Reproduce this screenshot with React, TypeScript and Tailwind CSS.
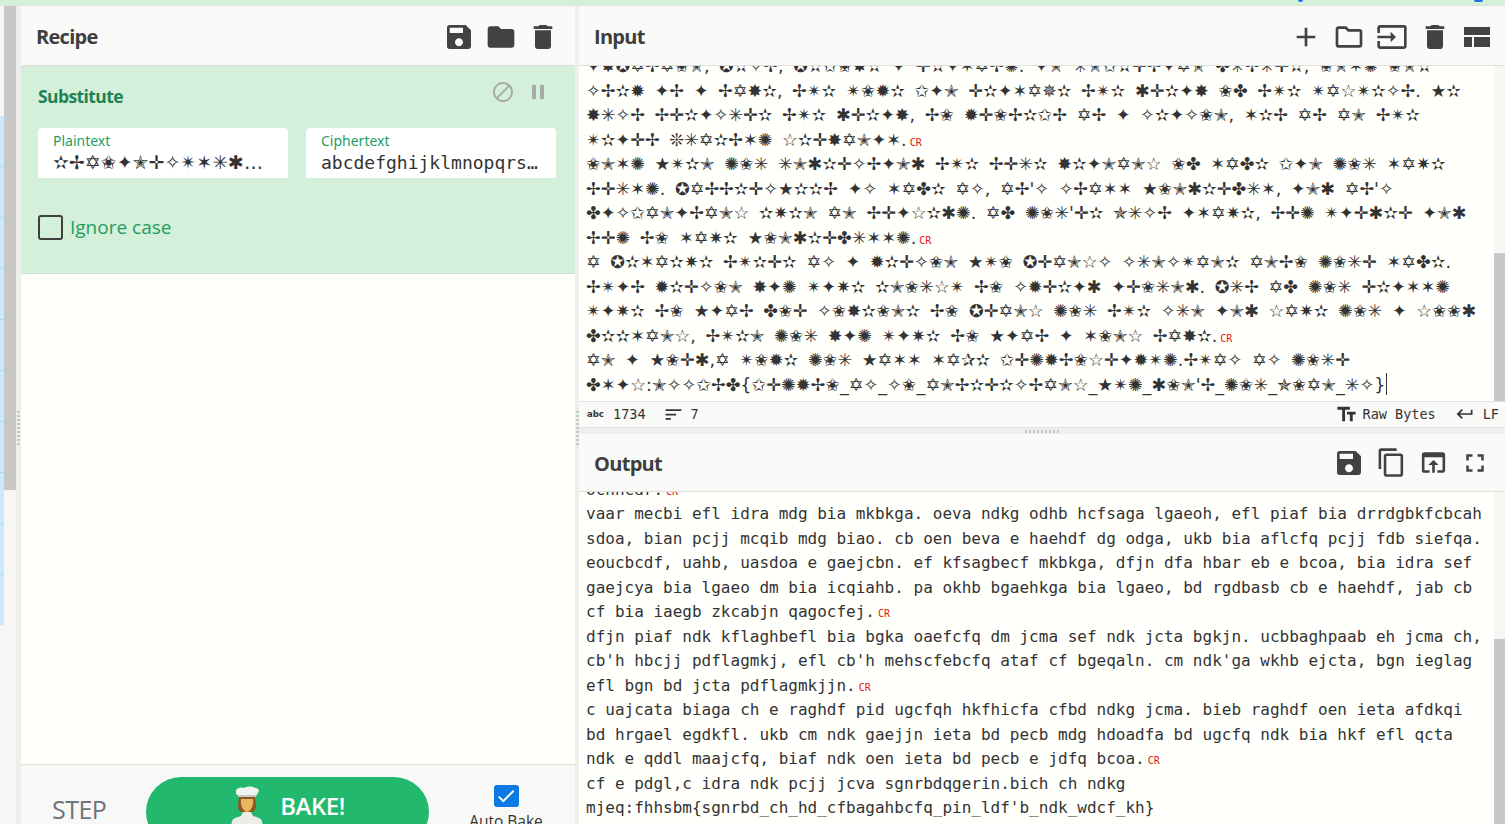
import React from 'react'
import {
  MdAdd, MdBlock, MdContentCopy, MdDelete, MdFolder, MdFullscreen, MdInput, MdKeyboardReturn,
  MdOpenInBrowser, MdOutlineFolder, MdPause, MdSave, MdSort, MdTextFields, MdCheck,
} from 'react-icons/md'

const glyphs: Record<string, string> = {
  a: '✫', b: '✢', c: '✡', d: '✬', e: '✦', f: '✭', g: '✛', h: '✧', i: '✴', j: '✶', k: '✳', l: '✱', m: '✤',
  n: '✺', o: '✸', p: '★', q: '☆', r: '✹', s: '✩', t: '✷', u: '✪', v: '✰', w: '✯', x: '✲', y: '✵', z: '❊',
}

const encode = (s: string) => s.replace(/[a-z]/g, (c) => glyphs[c])

const inputLines = [
  { text: 'eoucbcdf, uahb, uasdoa e gaejcbn. ef kfsagbecf mkbkga, dfjn dfa' },
  { text: 'hbar eb e bcoa, bia idra sef gaejcya bia lgaeo dm bia icqiahb. pa' },
  { text: 'okhb bgaehkga bia lgaeo, bd rgdbasb cb e haehdf, jab cb cf bia' },
  { text: 'iaegb zkcabjn qagocfej.', cr: true },
  { text: 'dfjn piaf ndk kflaghbefl bia bgka oaefcfq dm jcma sef ndk jcta' },
  { text: "bgkjn. ucbbaghpaab eh jcma ch, cb'h hbcjj pdflagmkj, efl cb'h" },
  { text: "mehscfebcfq ataf cf bgeqaln. cm ndk'ga wkhb ejcta, bgn ieglag efl" },
  { text: 'bgn bd jcta pdflagmkjjn.', cr: true },
  { text: 'c uajcata biaga ch e raghdf pid ugcfqh hkfhicfa cfbd ndkg jcma.' },
  { text: 'bieb raghdf oen ieta afdkqi bd hrgael egdkfl. ukb cm ndk gaejjn' },
  { text: 'ieta bd pecb mdg hdoadfa bd ugcfq ndk bia hkf efl qcta ndk e qddl' },
  { text: 'maajcfq, biaf ndk oen ieta bd pecb e jdfq bcoa.', cr: true },
  { text: 'cf e pdgl,c idra ndk pcjj jcva sgnrbdqgerin.bich ch ndkg' },
  { text: "mjeq:fhhsbm{sgnrbd_ch_hd_cfbagahbcfq_pin_ldf'b_ndk_wdcf_kh}", caret: true },
]

const outputLines = [
  { text: 'ochncdr.', cr: true },
  { text: 'vaar mecbi efl idra mdg bia mkbkga. oeva ndkg odhb hcfsaga lgaeoh, efl piaf bia drrdgbkfcbcah' },
  { text: 'sdoa, bian pcjj mcqib mdg biao. cb oen beva e haehdf dg odga, ukb bia aflcfq pcjj fdb siefqa.' },
  { text: 'eoucbcdf, uahb, uasdoa e gaejcbn. ef kfsagbecf mkbkga, dfjn dfa hbar eb e bcoa, bia idra sef' },
  { text: 'gaejcya bia lgaeo dm bia icqiahb. pa okhb bgaehkga bia lgaeo, bd rgdbasb cb e haehdf, jab cb' },
  { text: 'cf bia iaegb zkcabjn qagocfej.', cr: true },
  { text: 'dfjn piaf ndk kflaghbefl bia bgka oaefcfq dm jcma sef ndk jcta bgkjn. ucbbaghpaab eh jcma ch,' },
  { text: "cb'h hbcjj pdflagmkj, efl cb'h mehscfebcfq ataf cf bgeqaln. cm ndk'ga wkhb ejcta, bgn ieglag" },
  { text: 'efl bgn bd jcta pdflagmkjjn.', cr: true },
  { text: 'c uajcata biaga ch e raghdf pid ugcfqh hkfhicfa cfbd ndkg jcma. bieb raghdf oen ieta afdkqi' },
  { text: 'bd hrgael egdkfl. ukb cm ndk gaejjn ieta bd pecb mdg hdoadfa bd ugcfq ndk bia hkf efl qcta' },
  { text: 'ndk e qddl maajcfq, biaf ndk oen ieta bd pecb e jdfq bcoa.', cr: true },
  { text: 'cf e pdgl,c idra ndk pcjj jcva sgnrbdqgerin.bich ch ndkg' },
  { text: "mjeq:fhhsbm{sgnrbd_ch_hd_cfbagahbcfq_pin_ldf'b_ndk_wdcf_kh}" },
]

const Cr = () => (
  <span className="ml-[3px] font-['DejaVu_Sans_Mono',monospace] text-[10px] text-[#e3120b] [word-spacing:0]">CR</span>
)

function Handle({ vertical }: { vertical?: boolean }) {
  return (
    <div className={vertical ? 'flex flex-col gap-[2px]' : 'flex gap-[2px]'}>
      {[0, 1, 2, 3, 4, 5, 6, 7, 8].map((i) => (
        <div key={i} className={vertical ? 'h-[2px] w-[3px] bg-[#c9c9c9]' : 'h-[3px] w-[2px] bg-[#c9c9c9]'} />
      ))}
    </div>
  )
}

function LayoutIcon() {
  return (
    <svg width="26" height="20" viewBox="0 0 26 20" fill="#424242" className="ml-[2px]">
      <rect x="0" y="0" width="26" height="8" />
      <rect x="0" y="10" width="8" height="10" />
      <rect x="10" y="10" width="16" height="10" />
    </svg>
  )
}

function Chef() {
  return (
    <svg width="34" height="44" viewBox="0 0 34 44" className="shrink-0">
      <path d="M6 4c2-3 6-3 8-2 3-2 9-2 11 0 3 0 5 2 3 5l-2 3H9L6 8z" fill="#f2f2ee" />
      <path d="M8 9h18v2H8z" fill="#c9c9c2" />
      <path d="M9 11h16l1 8c0 4-2 6-3 7H11c-2-1-3-3-3-7z" fill="#8a5a24" />
      <path d="M11 13h12c1 6-2 12-6 13-4-1-7-7-6-13z" fill="#eab75f" />
      <path d="M13 26h8l2 4 6 2c3 1 4 5 4 12H1c0-7 1-11 4-12l6-2z" fill="#ecece8" />
    </svg>
  )
}

function PanelHeader({ title, children, h }: { title: string; children: React.ReactNode; h: string }) {
  return (
    <div className={`flex shrink-0 items-center justify-between border-b border-[#dedfdb] bg-[#fafbf8] ${h}`}>
      <span className="mt-[3px] font-['Open_Sans',sans-serif] text-[20px] font-bold tracking-[-0.7px] text-[#3e3e3e]">{title}</span>
      {children}
    </div>
  )
}

function Row({ text, cr, caret, coded }: { text: string; cr?: boolean; caret?: boolean; coded?: boolean }) {
  return (
    <div className="h-[24.5px] whitespace-pre leading-[24.5px]">
      {coded ? encode(text) : text}
      {caret && (
        <span className="relative">
          <span className="absolute left-[1px] top-[-2px] h-[22px] w-[1px] bg-[#333]" />
        </span>
      )}
      {cr && <Cr />}
    </div>
  )
}

function Field({ label, value, mono, pad }: { label: string; value: string; mono?: boolean; pad: string }) {
  return (
    <div className={`h-[50px] w-[250px] rounded-t-[4px] bg-white ${pad}`}>
      <div className="pt-[4px] font-['Noto_Sans',sans-serif] text-[14px] leading-[18px] text-[#1f9d62]">{label}</div>
      <div
        className={
          mono
            ? "font-['DejaVu_Sans_Mono',monospace] text-[18px] leading-[25px] text-[#333]"
            : "whitespace-pre font-['DejaVu_Sans',sans-serif] text-[19px] leading-[25px] text-[#333]"
        }
      >
        {value}
      </div>
    </div>
  )
}

export default function App() {
  return (
    <div className="relative flex h-[824px] w-[1505px] flex-col overflow-hidden bg-[#fafbf8]">
      <div className="h-[6px] shrink-0 border-b border-[#dfe3dc] bg-[#d4f0da]" />
      <div className="absolute left-[1298px] top-0 h-[2px] w-[5px] rounded-b bg-[#1a73e8]" />
      <div className="absolute left-[1474px] top-0 h-[2px] w-[9px] rounded-b bg-[#1a73e8]" />

      <div className="flex min-h-0 flex-1">
        {/* page edge behind the app */}
        <div className="flex w-[4px] shrink-0 flex-col">
          <div className="h-[110px] bg-[#f6f7f4]" />
          <div className="h-[509px] bg-[#cde8f8]">
            {[0, 1, 2, 3, 4, 5, 6, 7, 8, 9].map((i) => (
              <div key={i} className="h-[51px] border-b border-[#aed8f2]" />
            ))}
          </div>
          <div className="flex-1 bg-[#f6f7f4]" />
        </div>
        <div className="flex w-[12px] shrink-0 flex-col">
          <div className="h-[484px] bg-[#c8c8c8]" />
          <div className="flex-1 bg-[#f6f7f4]" />
        </div>
        <div className="flex w-[5px] shrink-0 justify-center bg-[#eeefec] pt-[405px]">
          <Handle vertical />
        </div>

        {/* recipe */}
        <div className="flex w-[554px] shrink-0 flex-col bg-[#fffffc]">
          <PanelHeader title="Recipe" h="h-[60px] pl-[15px] pr-[16px]">
            <div className="mt-[2px] flex items-center gap-[10px] text-[#424242]">
              <MdSave size={32} />
              <MdFolder size={32} />
              <MdDelete size={32} />
            </div>
          </PanelHeader>

          <div className="h-[208px] shrink-0 border-b border-[#c8e3cf] bg-[#d4f0da] px-[17px]">
            <div className="flex h-[62px] items-center justify-between pr-[8px]">
              <span className="-mt-[2px] font-['Open_Sans',sans-serif] text-[17.5px] font-bold tracking-[-0.6px] text-[#1d8352]">Substitute</span>
              <div className="-mt-[10px] flex items-center gap-[11px] text-[#a7aba7]">
                <MdBlock size={24} />
                <MdPause size={24} />
              </div>
            </div>
            <div className="flex gap-[18px]">
              <Field label="Plaintext" value={encode('abcdefghijkl') + '…'} pad="pl-[15px]" />
              <Field label="Ciphertext" value="abcdefghijklmnopqrs…" mono pad="pl-[15px]" />
            </div>
            <div className="mt-[37px] flex items-center gap-[7px]">
              <div className="h-[25px] w-[25px] rounded-[3px] border-2 border-[#3f3f3f]" />
              <span className="font-['Open_Sans',sans-serif] text-[19px] leading-[25px] text-[#1f9d62]">Ignore case</span>
            </div>
          </div>

          <div className="flex-1" />

          <div className="flex h-[60px] shrink-0 border-t border-[#dedfdb] bg-[#f8f9f6]">
            <span className="mt-[28px] ml-[31px] w-[54px] whitespace-pre font-['Open_Sans',sans-serif] text-[25px] font-medium leading-[32px] tracking-[-0.5px] text-[#6c757d]">STEP</span>
            <div className="mt-[12px] ml-[40px] flex h-[70px] w-[283px] items-start justify-center gap-[16px] rounded-full bg-[#22b96e] pt-[9px]">
              <Chef />
              <span className="mt-[4px] font-['Open_Sans',sans-serif] text-[24px] font-semibold leading-[32px] tracking-[-0.5px] text-white">BAKE!</span>
            </div>
            <div className="ml-[37px] mt-[20px] flex w-[80px] flex-col items-center">
              <div className="flex h-[25px] w-[25px] items-center justify-center rounded-[3px] bg-[#0b78e3] text-white">
                <MdCheck size={22} />
              </div>
              <span className="mt-[2px] whitespace-pre font-['Open_Sans',sans-serif] text-[15.5px] leading-[24px] text-[#333]">Auto Bake</span>
            </div>
          </div>
        </div>

        <div className="flex w-[4px] shrink-0 items-start justify-center bg-[#eeefec] pt-[405px]">
          <Handle vertical />
        </div>

        {/* input and output */}
        <div className="flex min-w-0 flex-1 flex-col">
          <PanelHeader title="Input" h="h-[60px] pl-[15px] pr-[15px]">
            <div className="mt-[2px] flex items-center gap-[11px] text-[#424242]">
              <MdAdd size={32} />
              <MdOutlineFolder size={32} />
              <MdInput size={32} />
              <MdDelete size={32} />
              <LayoutIcon />
            </div>
          </PanelHeader>

          <div className="relative h-[335px] shrink-0 overflow-hidden bg-[#fffffc] pl-[7px]">
            <div className="-mt-[12px] font-['DejaVu_Sans',sans-serif] text-[17.6px] text-[#333] [word-spacing:4px]">
              {inputLines.map((l, i) => (
                <Row key={i} {...l} coded />
              ))}
            </div>
            <div className="absolute bottom-0 right-0 top-0 w-[11px] bg-[#f6f6f4]">
              <div className="mt-[187px] h-[148px] bg-[#c8c8c8]" />
            </div>
          </div>

          <div className="flex h-[27px] shrink-0 items-center justify-between border-y border-[#e2e3df] bg-[#fafbf8] pl-[8px] pr-[6px] font-['DejaVu_Sans_Mono',monospace] text-[13.5px] text-[#333]">
            <div className="-mt-[1px] flex items-center">
              <span className="w-[26px] font-['DejaVu_Sans',sans-serif] text-[8.5px] font-bold">abc</span>
              <span>1734</span>
              <MdSort size={21} className="ml-[17px] mr-[7px]" />
              <span>7</span>
            </div>
            <div className="-mt-[1px] flex items-center">
              <MdTextFields size={23} />
              <span className="ml-[5px]">Raw Bytes</span>
              <MdKeyboardReturn size={20} className="ml-[19px] mr-[8px]" />
              <span>LF</span>
            </div>
          </div>

          <div className="flex h-[6px] shrink-0 items-center justify-center bg-[#eeefec]">
            <Handle />
          </div>

          <PanelHeader title="Output" h="h-[58px] pl-[15px] pr-[15px]">
            <div className="flex items-center gap-[11px] text-[#424242]">
              <MdSave size={32} />
              <MdContentCopy size={31} />
              <MdOpenInBrowser size={31} />
              <MdFullscreen size={30} />
            </div>
          </PanelHeader>

          <div className="relative min-h-0 flex-1 overflow-hidden bg-[#fffffc] pl-[7px]">
            <div className="-mt-[14.5px] font-['DejaVu_Sans_Mono',monospace] text-[16px] text-[#333]">
              {outputLines.map((l, i) => (
                <Row key={i} {...l} />
              ))}
            </div>
            <div className="absolute bottom-0 right-0 top-0 w-[11px] bg-[#f6f6f4]">
              <div className="mt-[147px] h-[190px] bg-[#c8c8c8]" />
            </div>
          </div>
        </div>
      </div>
    </div>
  )
}
